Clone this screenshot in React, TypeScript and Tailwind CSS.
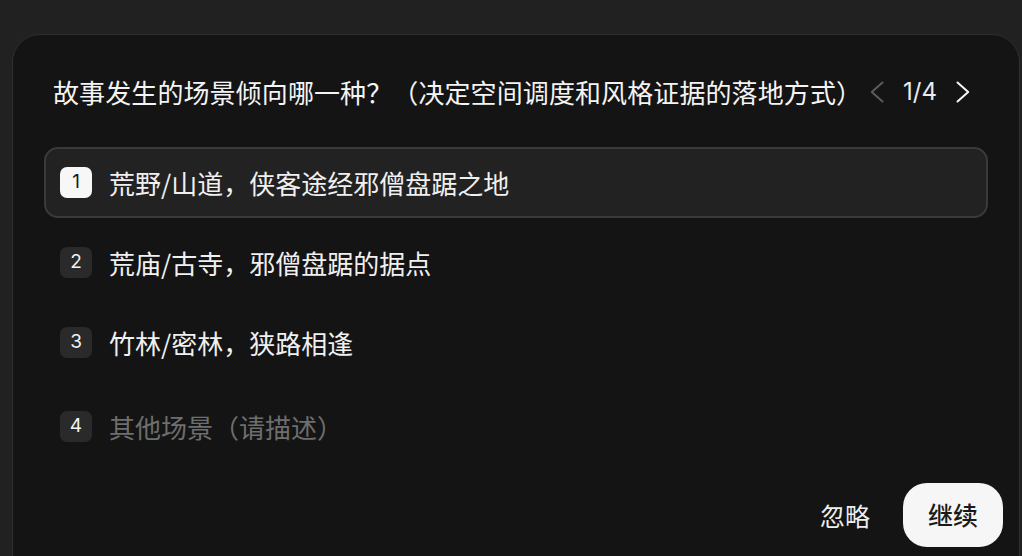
import React from "react";

const options = [
  { n: 1, label: "荒野/山道，侠客途经邪僧盘踞之地" },
  { n: 2, label: "荒庙/古寺，邪僧盘踞的据点" },
  { n: 3, label: "竹林/密林，狭路相逢" },
];

function Chevron({ dir, className }: { dir: "left" | "right"; className?: string }) {
  return (
    <svg width="14" height="22" viewBox="0 0 14 22" fill="none" className={className}>
      {dir === "left" ? (
        <polyline points="12.5,1.5 1.8,11 12.5,20.5" stroke="currentColor" strokeWidth="2" strokeLinecap="round" strokeLinejoin="round" />
      ) : (
        <polyline points="1.5,1.5 12.2,11 1.5,20.5" stroke="currentColor" strokeWidth="2" strokeLinecap="round" strokeLinejoin="round" />
      )}
    </svg>
  );
}

function Badge({ n, active }: { n: number; active?: boolean }) {
  return (
    <div
      className={
        active
          ? "flex h-[31px] w-[32px] shrink-0 items-center justify-center rounded-[7px] bg-[#f7f7f7] text-[19px] text-[#1b1b1b]"
          : "flex h-[31px] w-[32px] shrink-0 items-center justify-center rounded-[7px] bg-[#2a2a2a] text-[19px] text-[#f2f2f2]"
      }
      style={{ fontFamily: "Inter, 'Noto Sans', sans-serif" }}
    >
      {n}
    </div>
  );
}

export default function App() {
  return (
    <div
      className="h-[556px] overflow-hidden bg-[#212121] pl-[12px] pr-[2px] pt-[34px]"
      style={{ fontFamily: "'Noto Sans CJK SC', 'Noto Sans', sans-serif" }}
    >
      <div className="h-[600px] rounded-[28px] border border-[#2f2f2f] bg-[#141414]">
        {/* header */}
        <div className="flex items-center pl-[40px] pr-[49px] pt-[39px]">
          <h2 className="flex-1 text-[26px] font-normal leading-[36px] tracking-[0.1px] text-[#f4f4f4]">
            故事发生的场景倾向哪一种？（决定空间调度和风格证据的落地方式）
          </h2>
          <div className="flex items-center gap-[19px]">
            <Chevron dir="left" className="text-[#5c5c5c]" />
            <span
              className="text-[24px] leading-none text-[#ececec]"
              style={{ fontFamily: "Inter, 'Noto Sans', sans-serif" }}
            >
              1/4
            </span>
            <Chevron dir="right" className="text-[#f5f5f5]" />
          </div>
        </div>

        {/* options */}
        <div className="mt-[37px] flex flex-col gap-[9px] px-[31px]">
          {options.map((o, i) => (
            <div
              key={o.n}
              className={
                i === 0
                  ? "flex h-[71px] items-center gap-[17px] rounded-[14px] border-2 border-[#3a3a3a] bg-[#222222] px-[14px]"
                  : "flex h-[71px] items-center gap-[17px] rounded-[14px] border-2 border-transparent px-[14px]"
              }
            >
              <Badge n={o.n} active={i === 0} />
              <span className="text-[26px] leading-none text-[#f0f0f0]">{o.label}</span>
            </div>
          ))}
          <div className="mt-[4px] flex h-[71px] items-center gap-[17px] rounded-[14px] border-2 border-transparent px-[14px]">
            <Badge n={4} />
            <span className="text-[26px] leading-none text-[#6e6e6e]">其他场景（请描述）</span>
          </div>
        </div>

        {/* footer */}
        <div className="mt-[21px] flex items-center justify-end gap-[17px] pr-[16px]">
          <button className="px-[16px] text-[25px] leading-none text-[#eeeeee]">忽略</button>
          <button className="h-[64px] w-[100px] rounded-[24px] bg-[#f6f6f6] text-[25px] font-medium text-[#1a1a1a]">
            继续
          </button>
        </div>
      </div>
    </div>
  );
}
